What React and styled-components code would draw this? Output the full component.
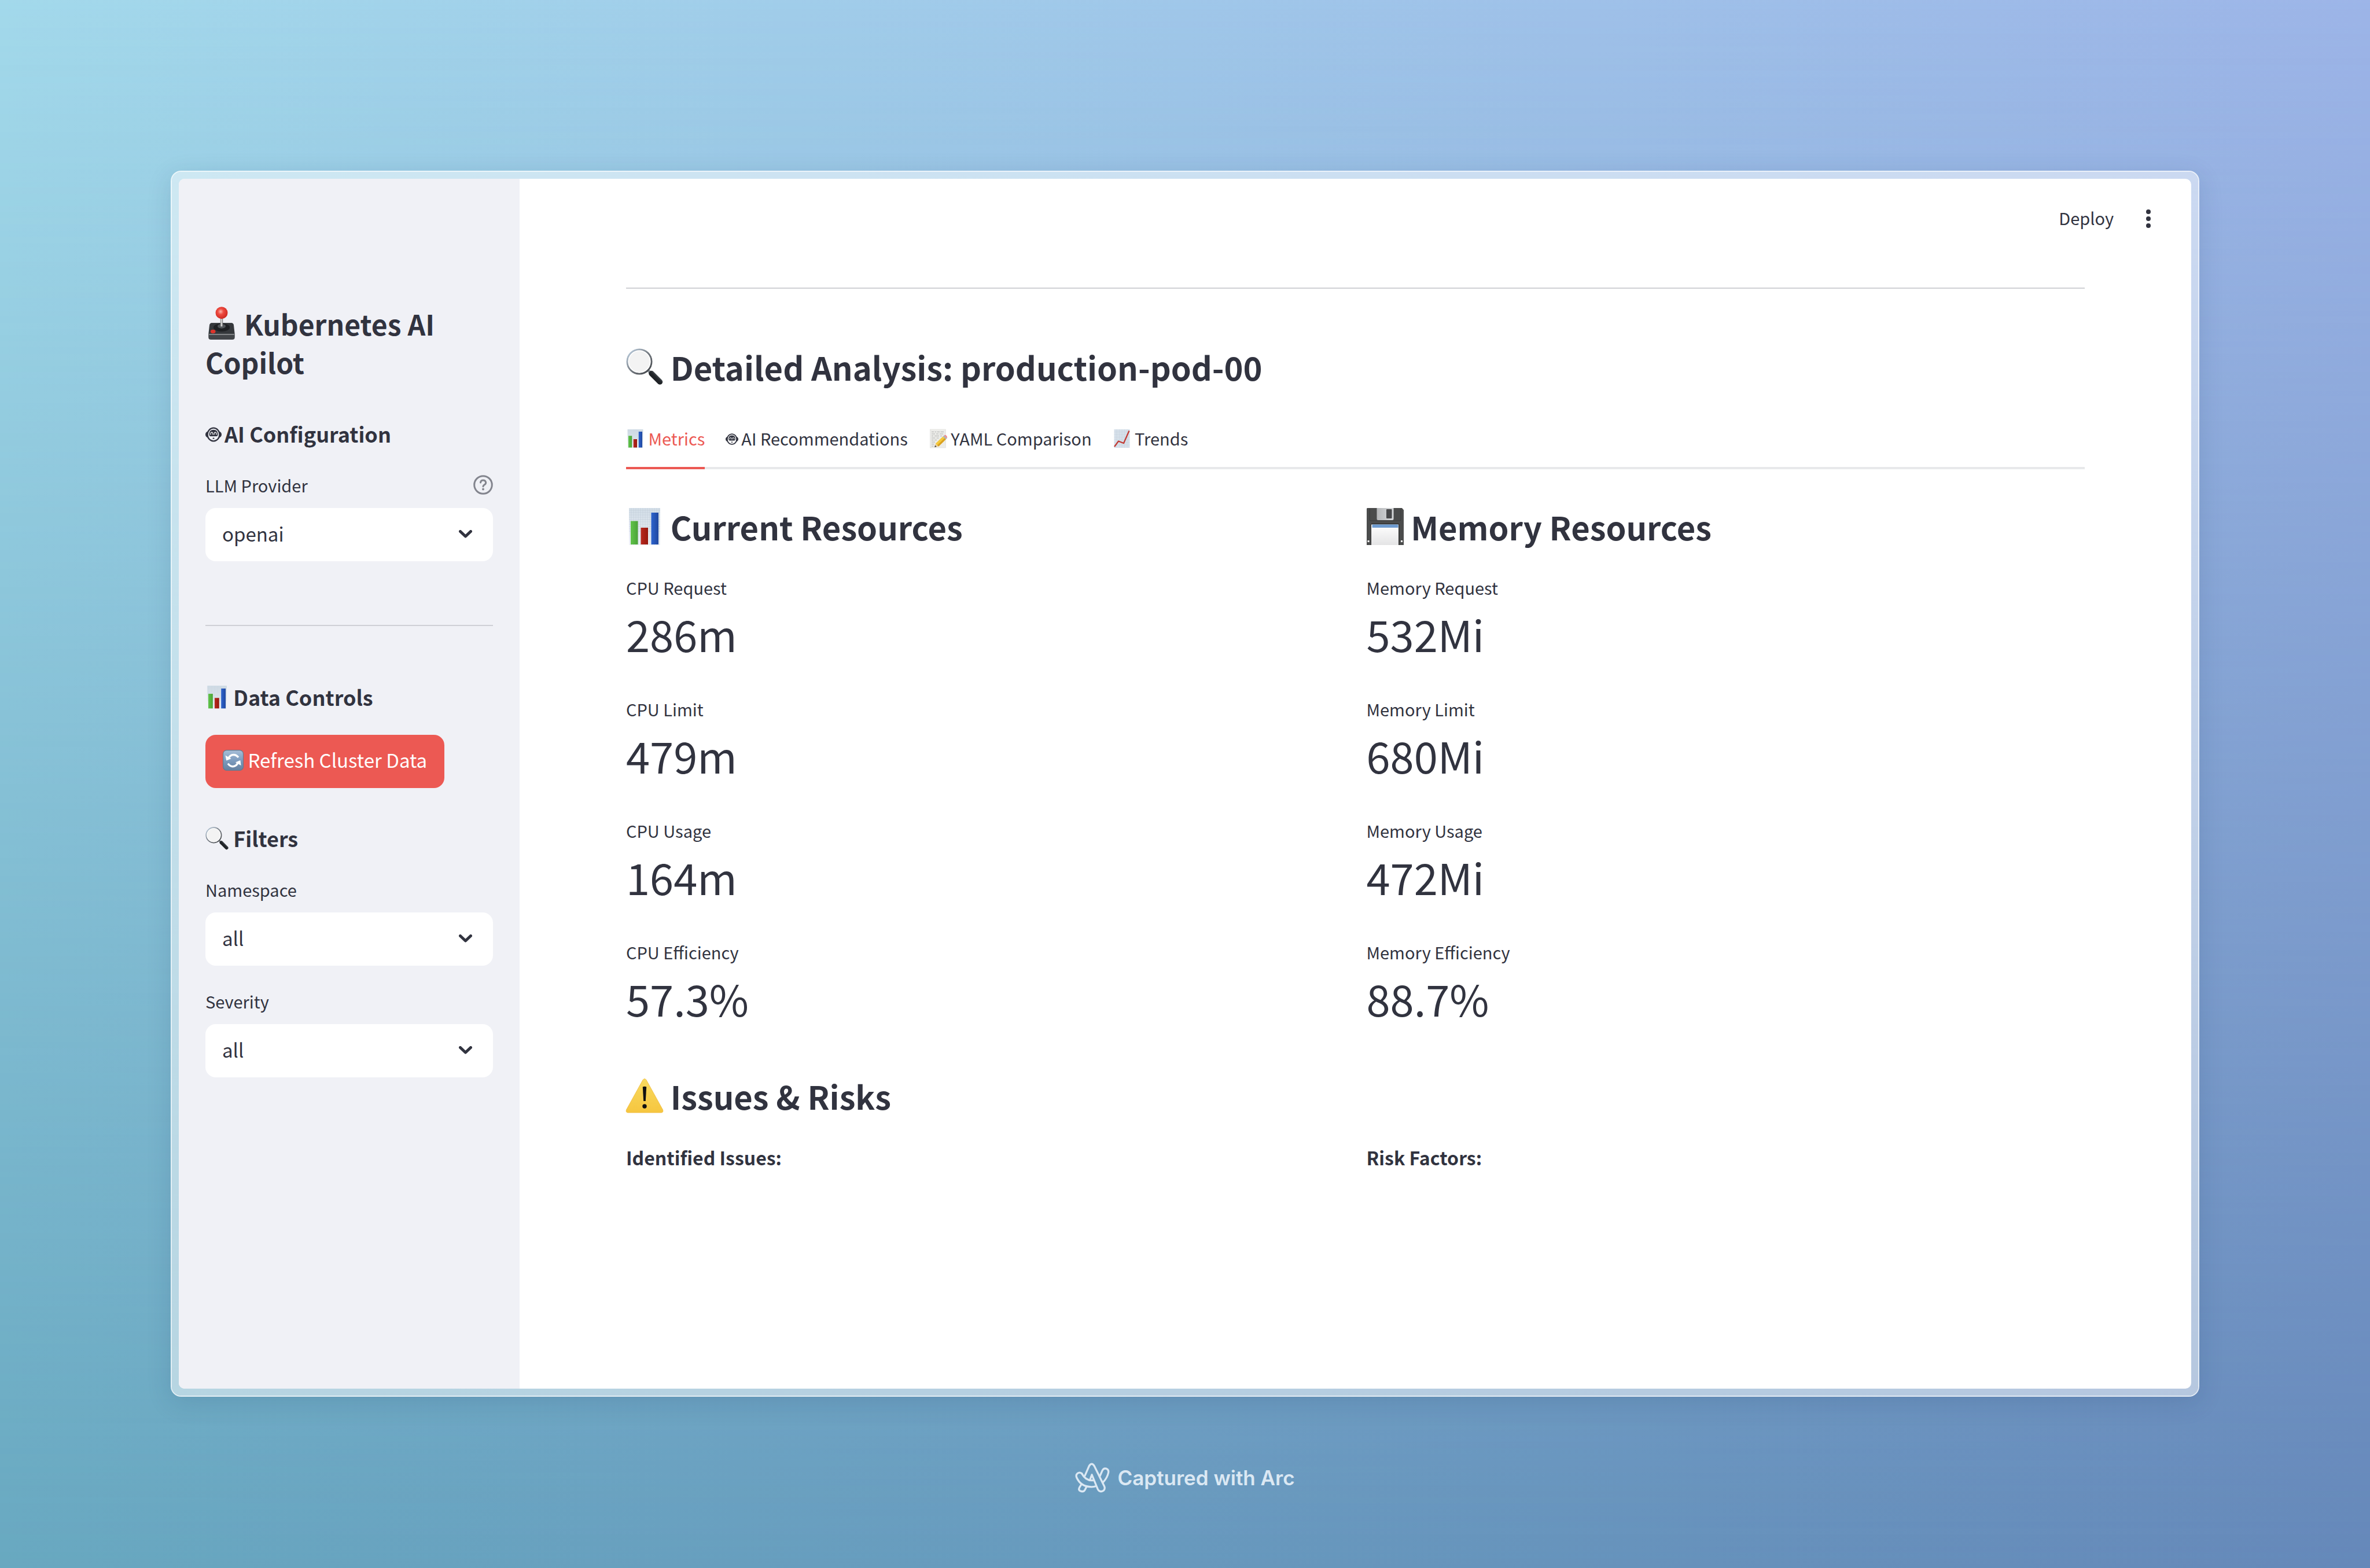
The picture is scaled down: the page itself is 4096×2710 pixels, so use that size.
import React from "react";
import styled, { createGlobalStyle } from "styled-components";

const ink = "#31333f";
const red = "#ec5953";
const uiFont = `"Noto Sans CJK SC", "Noto Sans", sans-serif`;

const GlobalStyle = createGlobalStyle`
  *, *::before, *::after { box-sizing: border-box; }
  body {
    margin: 0;
    font-family: ${uiFont};
    color: ${ink};
  }
  h1, h2, h3, p, dl, dt, dd { margin: 0; }
  button, select { font-family: inherit; color: inherit; }
`;

const Backdrop = styled.div`
  position: relative;
  isolation: isolate;
  min-height: 100vh;
  display: flex;
  flex-direction: column;
  padding: 295px 295px 0;
  background: linear-gradient(to right, #a3d9eb, #9db5e8);
  &::before {
    content: "";
    position: absolute;
    inset: 0;
    z-index: -1;
    background: linear-gradient(to right, #68a8c0, #6588b9);
    mask-image: linear-gradient(to bottom, transparent, #000);
  }
`;

const Frame = styled.div`
  display: flex;
  padding: 12px;
  border: 2px solid rgba(255, 255, 255, 0.8);
  border-radius: 18px;
  background: rgba(255, 255, 255, 0.5);
  background-clip: padding-box;
  box-shadow: 0 10px 44px rgba(20, 50, 90, 0.14);
`;

const Window = styled.div`
  flex: 1;
  display: flex;
  min-height: 2091px;
  border-radius: 10px;
  overflow: hidden;
  background: #fff;
`;

const Sidebar = styled.aside`
  flex: 0 0 589px;
  padding: 217px 46px 0;
  background: #f0f1f6;
`;

const AppTitle = styled.h1`
  font-size: 48px;
  line-height: 66px;
  font-weight: 600;
  margin-bottom: 66px;
`;

const SideHeading = styled.h2`
  font-size: 36px;
  line-height: 50px;
  font-weight: 600;
`;

const Field = styled.div`
  margin-top: ${(p) => (p.$stacked ? 41 : 44)}px;
`;

const FieldHead = styled.div`
  display: flex;
  align-items: center;
  justify-content: space-between;
  height: 40px;
  margin-bottom: 20px;
  font-size: 29px;
  line-height: 40px;
`;

const HelpButton = styled.button`
  display: flex;
  padding: 0;
  border: 0;
  background: none;
`;

const SelectBox = styled.div`
  position: relative;
  svg {
    position: absolute;
    right: 36px;
    top: 38px;
    pointer-events: none;
  }
`;

const Select = styled.select`
  display: block;
  width: 100%;
  height: 92px;
  padding: 0 80px 4px 29px;
  border: 0;
  border-radius: 18px;
  appearance: none;
  background: #fff;
  font-size: 33px;
`;

const SideRule = styled.hr`
  height: 2px;
  margin: 110px 0 97px;
  border: 0;
  background: #cfd0d6;
`;

const PrimaryButton = styled.button`
  display: block;
  height: 92px;
  margin: 41px 0 61px;
  padding: 0 30px 6px;
  border: 0;
  border-radius: 18px;
  background: ${red};
  color: #fff;
  font-size: 33px;
`;

const Main = styled.main`
  flex: 1;
  min-width: 0;
`;

const Toolbar = styled.header`
  display: flex;
  align-items: center;
  justify-content: flex-end;
  gap: 44px;
  height: 138px;
  padding-right: 58px;
`;

const ToolButton = styled.button`
  display: flex;
  padding: 0;
  border: 0;
  background: none;
`;

const DeployButton = styled(ToolButton)`
  padding-bottom: 4px;
  font-size: 29px;
  line-height: 40px;
`;

const Content = styled.div`
  padding: 50px 184px 0;
`;

const Rule = styled.hr`
  height: 2px;
  margin: 0 0 96px;
  border: 0;
  background: #cfd0d4;
`;

const Heading = styled.h2`
  font-size: 56px;
  line-height: 78px;
  font-weight: 600;
`;

const TabList = styled.div`
  display: flex;
  gap: 36px;
  margin: 46px 0 60px;
  box-shadow: inset 0 -4px 0 #e8e9eb;
`;

const Tab = styled.button`
  padding: 18px 0 30px;
  border: 0;
  border-bottom: 4px solid ${(p) => (p.$active ? red : "transparent")};
  background: none;
  color: ${(p) => (p.$active ? red : ink)};
  font-size: 29px;
  line-height: 40px;
`;

const Columns = styled.div`
  display: grid;
  grid-template-columns: 1fr 1fr;
  column-gap: 38px;
`;

const MetricList = styled.dl`
  display: grid;
  row-gap: 68px;
  margin: 46px 0 88px;
`;

const MetricLabel = styled.dt`
  font-size: 29px;
  line-height: 40px;
  margin-bottom: 18px;
`;

const MetricValue = styled.dd`
  font-size: 74px;
  line-height: 84px;
`;

const StrongLine = styled.p`
  margin-top: 45px;
  font-size: 32px;
  line-height: 44px;
  font-weight: 600;
`;

const Credit = styled.footer`
  display: flex;
  align-items: center;
  justify-content: center;
  gap: 13px;
  margin-top: 114px;
  color: #dbe8f3;
  font-family: Inter, sans-serif;
  font-size: 35px;
  line-height: 52px;
  font-weight: 600;
`;

const Glyph = styled.svg`
  width: ${(p) => p.$size}px;
  height: ${(p) => p.$size}px;
  vertical-align: -${(p) => Math.round(p.$size / 8)}px;
  overflow: visible;
`;

const BotGlyph = styled.svg`
  width: ${(p) => p.$size}px;
  height: ${(p) => p.$size}px;
  margin-right: 5px;
`;

function Magnifier({ size }) {
  return (
    <Glyph $size={size} viewBox="0 0 64 64" aria-hidden="true">
      <defs>
        <linearGradient id="lensRim" x1="0" y1="0" x2="1" y2="1">
          <stop offset="0" stopColor="#c3d6e8" />
          <stop offset=".5" stopColor="#777d84" />
          <stop offset="1" stopColor="#3b3e42" />
        </linearGradient>
        <linearGradient id="lensHandle" x1="0" y1="1" x2="1" y2="0">
          <stop offset="0" stopColor="#15171a" />
          <stop offset=".55" stopColor="#23272b" />
          <stop offset="1" stopColor="#6e757b" />
        </linearGradient>
      </defs>
      <path d="M37 37l7 7" stroke="#8b9096" strokeWidth="5" />
      <path d="M44 43.500L58.500 58" stroke="url(#lensHandle)" strokeWidth="9.500" strokeLinecap="round" />
      <circle cx="23" cy="23" r="21" fill="#f3f3f3" stroke="url(#lensRim)" strokeWidth="3" />
      <circle cx="23" cy="23" r="18.800" fill="none" stroke="#fff" strokeWidth="1.500" />
    </Glyph>
  );
}

function BarChart({ size }) {
  return (
    <Glyph $size={size} viewBox="0 0 64 64" aria-hidden="true">
      <defs>
        <linearGradient id="sheet" x1="0" y1="0" x2="0" y2="1">
          <stop offset="0" stopColor="#d3dee8" />
          <stop offset="1" stopColor="#eef2f6" />
        </linearGradient>
        <linearGradient id="barGreen" x1="0" x2="1">
          <stop offset="0" stopColor="#61c44a" />
          <stop offset="1" stopColor="#4ba338" />
        </linearGradient>
        <linearGradient id="barRed" x1="0" x2="1">
          <stop offset="0" stopColor="#b8291f" />
          <stop offset="1" stopColor="#97190f" />
        </linearGradient>
        <linearGradient id="barBlue" x1="0" x2="1">
          <stop offset="0" stopColor="#2d63cd" />
          <stop offset="1" stopColor="#2048a0" />
        </linearGradient>
      </defs>
      <rect x="5" y="0" width="54" height="64" fill="url(#sheet)" />
      <path
        d="M5 4h54M5 8h54M5 12h54M5 16h54M5 20h54M5 24h54M5 28h54M5 32h54M5 36h54M5 40h54M9 0v64M13 0v64M17 0v64M21 0v64M25 0v64M29 0v64M33 0v64M37 0v64M41 0v64M45 0v64M49 0v64M53 0v64M57 0v64"
        stroke="#bccad6"
        strokeWidth=".5"
      />
      <rect x="8" y="22.500" width="12.500" height="40.500" fill="url(#barGreen)" />
      <rect x="25.500" y="34" width="12.500" height="29" fill="url(#barRed)" />
      <rect x="43.500" y="8" width="12.500" height="55" fill="url(#barBlue)" />
    </Glyph>
  );
}

function Joystick({ size }) {
  return (
    <Glyph $size={size} viewBox="0 0 64 64" aria-hidden="true">
      <defs>
        <radialGradient id="ball" cx=".42" cy=".4" r=".6">
          <stop offset="0" stopColor="#fcb6ac" />
          <stop offset=".4" stopColor="#ee4b40" />
          <stop offset="1" stopColor="#cf2a22" />
        </radialGradient>
        <linearGradient id="shaft" x1="0" x2="1">
          <stop offset="0" stopColor="#777" />
          <stop offset=".5" stopColor="#eee" />
          <stop offset="1" stopColor="#555" />
        </linearGradient>
      </defs>
      <path d="M12 31h40q3 0 4 4l2 18v6q0 5-5 5H11q-5 0-5-5v-6l2-18q1-4 4-4z" fill="#43464a" />
      <path d="M7 53h50l-2-19q-1-3-3-3H12q-2 0-3 3z" fill="#35383c" />
      <path d="M7 53.500h50" stroke="#8b8e91" strokeWidth="2" />
      <ellipse cx="32" cy="40" rx="16" ry="8" fill="#1f2124" />
      <ellipse cx="32" cy="37.500" rx="8" ry="4.500" fill="#52565a" />
      <rect x="29.500" y="20" width="5" height="18" fill="url(#shaft)" />
      <circle cx="32" cy="11" r="12" fill="url(#ball)" />
      <ellipse cx="15" cy="48" rx="5" ry="3.600" fill="#dd342b" />
    </Glyph>
  );
}

function Floppy({ size }) {
  return (
    <Glyph $size={size} viewBox="0 0 64 64" aria-hidden="true">
      <defs>
        <linearGradient id="shutter" x1="0" x2="1">
          <stop offset="0" stopColor="#b6b8ba" />
          <stop offset="1" stopColor="#d6d8da" />
        </linearGradient>
        <linearGradient id="paper" x1="0" y1="0" x2="0" y2="1">
          <stop offset="0" stopColor="#fff" />
          <stop offset="1" stopColor="#e4e4e5" />
        </linearGradient>
      </defs>
      <path d="M1 0h60l3 3.500V64H0V1z" fill="#4b4c4c" />
      <path d="M5 1v19q0 2 2 2h50q2 0 2-2V1" fill="none" stroke="#3a3b3b" strokeWidth="1" />
      <path d="M17.500 0h29v19q0 2-2 2h-25q-2 0-2-2z" fill="url(#shutter)" />
      <rect x="34" y="2" width="9.500" height="16" rx="1" fill="#47484a" />
      <path d="M7 64V29q0-2.500 2.500-2.500H54q2.500 0 2.500 2.500v35z" fill="#333" />
      <path d="M8 64V28.500h47V64z" fill="url(#paper)" />
      <rect x="9.500" y="28.500" width="45" height="5.500" fill="#6d9bd0" />
      <rect x="1.500" y="56" width="3" height="3" fill="#fff" />
      <rect x="59" y="56" width="3" height="3" fill="#fff" />
    </Glyph>
  );
}

function Warning({ size }) {
  return (
    <Glyph $size={size} viewBox="0 0 64 64" aria-hidden="true">
      <defs>
        <linearGradient id="amber" x1="0" y1="0" x2="0" y2="1">
          <stop offset="0" stopColor="#f8da5f" />
          <stop offset="1" stopColor="#f6c63f" />
        </linearGradient>
      </defs>
      <path
        d="M29 4.500q3-4 6 0L63.500 56q1.500 5-3 5h-57q-4.500 0-3-5z"
        fill="url(#amber)"
        stroke="#efb93a"
        strokeWidth=".8"
      />
      <path d="M28.800 16.500q3.200-1.500 6.400 0L33.800 41h-3.600z" fill="#111" />
      <circle cx="32" cy="50" r="3.700" fill="#111" />
    </Glyph>
  );
}

function Memo({ size }) {
  return (
    <Glyph $size={size} viewBox="0 0 64 64" aria-hidden="true">
      <rect x="5" y="0" width="54" height="64" fill="#ecece9" stroke="#dadad6" />
      <path
        d="M10 9h8M21 9h5M29 9h9M41 9h11M10 16h12M26 16h8M38 16h12M10 23h6M20 23h16M40 23h6M10 30h13M27 30h8M10 37h7M20 37h8M10 44h12M10 51h9M10 58h7"
        stroke="#b0b1af"
        strokeWidth="2"
      />
      <path d="M20.500 61.500l3-12 11 9.500z" fill="#e9cf9f" />
      <path d="M20.500 61.500l1.500-6 5.500 4.500z" fill="#333" />
      <path d="M23.500 49.500L49 25l10.500 9.500L34.500 59z" fill="#f5c93c" />
      <path d="M29.500 55L55 30.500l4.500 4L34.500 59z" fill="#d9a020" />
      <path d="M49 25l4-3.500L63.500 31l-4 3.500z" fill="#a9b2b8" />
      <path d="M53 21.500q4-4 8.500.5t2 9z" fill="#ee8a90" />
    </Glyph>
  );
}

function TrendChart({ size }) {
  return (
    <Glyph $size={size} viewBox="0 0 64 64" aria-hidden="true">
      <rect x="5" y="0" width="54" height="64" fill="#d6e0ea" />
      <path
        d="M5 9h54M5 18h54M5 27h54M5 36h54M5 45h54M5 54h54M14 0v64M23 0v64M32 0v64M41 0v64M50 0v64"
        stroke="#c2cfdb"
        strokeWidth=".8"
      />
      <path d="M6 60L20 41l18 7L57 5" fill="none" stroke="#c23a33" strokeWidth="4.500" strokeLinejoin="round" />
    </Glyph>
  );
}

function Refresh({ size }) {
  return (
    <Glyph $size={size} viewBox="0 0 64 64" aria-hidden="true">
      <defs>
        <linearGradient id="tile" x1="0" y1="0" x2="0" y2="1">
          <stop offset="0" stopColor="#a7bfd8" />
          <stop offset=".5" stopColor="#7d9cbf" />
          <stop offset="1" stopColor="#64809f" />
        </linearGradient>
      </defs>
      <rect x="1" y="1" width="62" height="62" rx="11" fill="url(#tile)" stroke="#66788c" strokeWidth="2" />
      <path d="M17 27q5-12 16-12 9 0 15 8M47 38q-5 13-16 13-9 0-15-9" fill="none" stroke="#fff" strokeWidth="6" />
      <path d="M8 17l3 16 15-6zM56 48l-2-16-15 6z" fill="#fff" />
    </Glyph>
  );
}

function Robot({ size }) {
  return (
    <BotGlyph $size={size} viewBox="0 0 36 36" aria-hidden="true">
      <path d="M5 11q-5 2-5 7t5 7zM31 11q5 2 5 7t-5 7z" fill={ink} />
      <ellipse cx="18" cy="18" rx="13.400" ry="14.600" fill="none" stroke={ink} strokeWidth="3" />
      <path d="M8.500 16q.5-8.500 9.500-8.500T27.500 16q.5 6-3.500 6H12q-4 0-3.500-6z" fill={ink} />
      <path
        d="M11.500 18.500q0-5.500 2.600-5.500t2.600 5.500M19.300 18.500q0-5.500 2.600-5.500t2.600 5.500"
        fill="none"
        stroke="#fff"
        strokeWidth="1.600"
      />
      <ellipse cx="18" cy="26.500" rx="2" ry="1.400" fill={ink} />
    </BotGlyph>
  );
}

function ArcLogo() {
  return (
    <svg width="60" height="52" viewBox="82 96 219 190" aria-hidden="true">
      <g fill="none" stroke="currentColor" strokeWidth="12" strokeLinejoin="round" strokeLinecap="round">
        <path d="M144 178L171 116Q187 92 203 116L267 246Q273 261 262 272Q239 286 226 265L188 172L176 204" />
        <path d="M124 164Q110 153 97 164Q85 174 92 190Q118 248 186 249Q202 249 214 244" />
        <path d="M124 164Q148 208 188 208Q194 208 200 206" />
        <path d="M121 234L110 252Q101 268 114 274Q134 284 144 268L155 247" />
        <path d="M239 180L254 146Q262 128 281 134Q296 141 292 160Q285 192 261 217" />
      </g>
    </svg>
  );
}

function HelpIcon() {
  return (
    <svg width="34" height="34" viewBox="0 0 34 34" aria-hidden="true">
      <g fill="none" stroke="#83858e" strokeWidth="3" strokeLinecap="round">
        <circle cx="17" cy="17" r="15.300" />
        <path d="M12.500 13q.5-4 4.500-4t4.700 4q0 2.500-2.700 4-2 1.200-2 2.800" />
      </g>
      <circle cx="17" cy="24.500" r="1.900" fill="#83858e" />
    </svg>
  );
}

function Chevron() {
  return (
    <svg width="23" height="14" viewBox="0 0 23 14" aria-hidden="true">
      <path d="M2.500 2.500l9 8.500 9-8.500" fill="none" stroke={ink} strokeWidth="5" strokeLinecap="round" strokeLinejoin="round" />
    </svg>
  );
}

function Dots() {
  return (
    <svg width="32" height="34" viewBox="0 0 32 34" fill={ink} aria-hidden="true">
      <circle cx="16" cy="5" r="4" />
      <circle cx="16" cy="17" r="4" />
      <circle cx="16" cy="29" r="4" />
    </svg>
  );
}

function SelectField({ id, label, value, help, stacked }) {
  return (
    <Field $stacked={stacked}>
      <FieldHead>
        <label htmlFor={id}>{label}</label>
        {help && (
          <HelpButton type="button" aria-label="Help">
            <HelpIcon />
          </HelpButton>
        )}
      </FieldHead>
      <SelectBox>
        <Select id={id} defaultValue={value}>
          <option value={value}>{value}</option>
        </Select>
        <Chevron />
      </SelectBox>
    </Field>
  );
}

function Metrics({ items }) {
  return (
    <MetricList>
      {items.map(([label, value]) => (
        <div key={label}>
          <MetricLabel>{label}</MetricLabel>
          <MetricValue>{value}</MetricValue>
        </div>
      ))}
    </MetricList>
  );
}

const cpu = [
  ["CPU Request", "286m"],
  ["CPU Limit", "479m"],
  ["CPU Usage", "164m"],
  ["CPU Efficiency", "57.3%"],
];

const memory = [
  ["Memory Request", "532Mi"],
  ["Memory Limit", "680Mi"],
  ["Memory Usage", "472Mi"],
  ["Memory Efficiency", "88.7%"],
];

export default function App() {
  return (
    <>
      <GlobalStyle />
      <Backdrop>
        <Frame>
          <Window>
            <Sidebar>
              <AppTitle><Joystick size={56} /> Kubernetes AI Copilot</AppTitle>
              <SideHeading><Robot size={28} />AI Configuration</SideHeading>
              <SelectField id="provider" label="LLM Provider" value="openai" help />
              <SideRule />
              <SideHeading><BarChart size={40} /> Data Controls</SideHeading>
              <PrimaryButton type="button"><Refresh size={36} /> Refresh Cluster Data</PrimaryButton>
              <SideHeading><Magnifier size={40} /> Filters</SideHeading>
              <SelectField id="namespace" label="Namespace" value="all" />
              <SelectField id="severity" label="Severity" value="all" stacked />
            </Sidebar>
            <Main>
              <Toolbar>
                <DeployButton type="button">Deploy</DeployButton>
                <ToolButton type="button" aria-label="Menu"><Dots /></ToolButton>
              </Toolbar>
              <Content>
                <Rule />
                <Heading><Magnifier size={64} /> Detailed Analysis: production-pod-00</Heading>
                <TabList role="tablist">
                  <Tab type="button" role="tab" aria-selected="true" $active><BarChart size={32} /> Metrics</Tab>
                  <Tab type="button" role="tab" aria-selected="false"><Robot size={22} />AI Recommendations</Tab>
                  <Tab type="button" role="tab" aria-selected="false"><Memo size={32} /> YAML Comparison</Tab>
                  <Tab type="button" role="tab" aria-selected="false"><TrendChart size={32} /> Trends</Tab>
                </TabList>
                <Columns>
                  <section>
                    <Heading><BarChart size={64} /> Current Resources</Heading>
                    <Metrics items={cpu} />
                  </section>
                  <section>
                    <Heading><Floppy size={64} /> Memory Resources</Heading>
                    <Metrics items={memory} />
                  </section>
                </Columns>
                <Heading><Warning size={64} /> Issues &amp; Risks</Heading>
                <Columns>
                  <StrongLine>Identified Issues:</StrongLine>
                  <StrongLine>Risk Factors:</StrongLine>
                </Columns>
              </Content>
            </Main>
          </Window>
        </Frame>
        <Credit>
          <ArcLogo />
          <span>Captured with Arc</span>
        </Credit>
      </Backdrop>
    </>
  );
}
